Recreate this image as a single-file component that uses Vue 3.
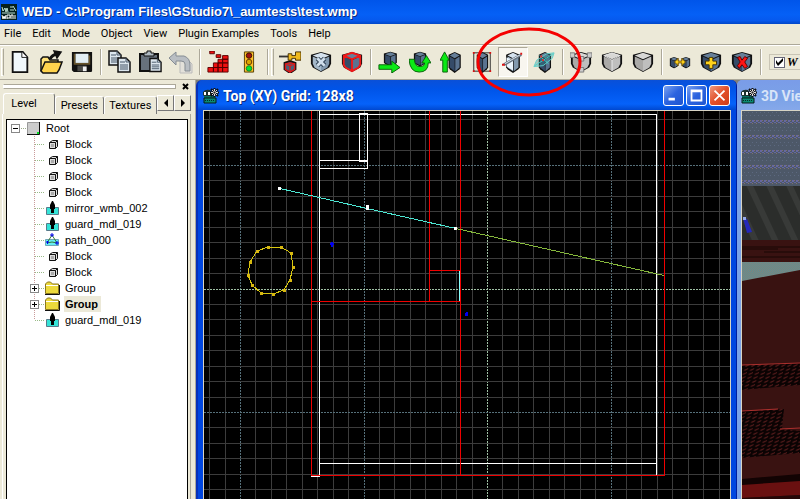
<script setup>
import { ref } from 'vue'

const menus = ['File', 'Edit', 'Mode', 'Object', 'View', 'Plugin Examples', 'Tools', 'Help']
const tools = [
  { id: 'grip' },
  { id: 'new', label: 'New' },
  { id: 'open', label: 'Open' },
  { id: 'save', label: 'Save' },
  { id: 'sep' },
  { id: 'copy', label: 'Copy' },
  { id: 'paste', label: 'Paste' },
  { id: 'undo', label: 'Undo' },
  { id: 'sep' },
  { id: 'build', label: 'Build' },
  { id: 'run', label: 'Run' },
  { id: 'sep' },
  { id: 'grip' },
  { id: 'pin', label: 'Pin' },
  { id: 'deselect', label: 'Deselect' },
  { id: 'select', label: 'Select' },
  { id: 'sep' },
  { id: 'move', label: 'Move' },
  { id: 'rotate', label: 'Rotate' },
  { id: 'scale', label: 'Scale' },
  { id: 'frame', label: 'Frame' },
  { id: 'clip', label: 'Clip plane' },
  { id: 'orbit', label: 'Slice' },
  { id: 'sep' },
  { id: 'vertex', label: 'Vertices' },
  { id: 'edge', label: 'Edges' },
  { id: 'face', label: 'Faces' },
  { id: 'sep' },
  { id: 'link', label: 'Link' },
  { id: 'add', label: 'Add' },
  { id: 'remove', label: 'Remove' },
  { id: 'sep' }
]
const active = ref('clip')
const wire = ref(true)
const tab = ref('Level')
const tree = [
  { t: 'Block', k: 'block' },
  { t: 'Block', k: 'block' },
  { t: 'Block', k: 'block' },
  { t: 'Block', k: 'block' },
  { t: 'mirror_wmb_002', k: 'entity' },
  { t: 'guard_mdl_019', k: 'entity' },
  { t: 'path_000', k: 'path' },
  { t: 'Block', k: 'block' },
  { t: 'Block', k: 'block' },
  { t: 'Group', k: 'folder' },
  { t: 'Group', k: 'folder', sel: true },
  { t: 'guard_mdl_019', k: 'entity' }
]
const ring = [[257, 251], [268, 247], [281, 247], [291, 253], [293, 267], [290, 280], [284, 290], [273, 294], [261, 293], [252, 285], [248, 275], [250, 262]]
const ringPoints = ring.map((p) => p.join(',')).join(' ')
const origin = { x: 240, y: 165 }
const step = 15.4375
const cols = []
const rows = []
for (let i = -3; i < 33; i++) cols.push({ p: Math.round(origin.x + i * step), major: i % 8 === 0 && i !== 16, axis: i === 16 })
for (let i = -4; i < 23; i++) rows.push({ p: Math.round(origin.y + i * step), major: i % 8 === 0 && i !== 8, axis: i === 8 })
</script>

<template>
  <div class="app">
    <svg class="defs" width="0" height="0" aria-hidden="true">
      <defs>
        <symbol id="cube" viewBox="0 0 24 24" preserveAspectRatio="none">
          <path d="M2 4 12 1l10 3v14l-2 2-8 4-8-4-2-2z" fill="#111" />
          <path d="m4 5 8-3 8 3-8 3z" class="c1" />
          <path d="m4 6 8 3v13l-8-4z" class="c2" />
          <path d="m13 9 7-3v12l-7 4z" class="c3" />
        </symbol>
        <symbol id="shield" viewBox="0 0 24 24">
          <path d="M1 4 12 1l11 3v10l-2 4-9 5-9-5-2-4z" fill="#111" />
          <path d="m3 5 9-3 9 3-9 4z" class="c1" />
          <path d="m3 6 9 4v12l-7-4-2-4z" class="c2" />
          <path d="m12 10 9-4v8l-2 4-7 4z" class="c3" />
        </symbol>
        <symbol id="logo" viewBox="0 0 16 16">
          <path d="M0 4q2-3 7-2l2 3v3H1q-2-1-1-4z" fill="#1c3230" />
          <path d="M1 8h11v2H1z" fill="#087060" />
          <path d="M1 10h12v5H1z" fill="#0b8a72" stroke="#041c18" />
          <path d="M1 4h2v3H1zm4 0h2v3H5z" fill="#fff" />
          <path d="M2 12.500h10" stroke="#062a24" stroke-dasharray="1 1" />
          <path d="m8 1 7 7m0-7-7 7m3.500-8v9M7 4.500h9" stroke="#111" stroke-width="2" />
          <path d="m9 2 5 5m0-5-5 5m2.500-6v7M8 4.500h7" stroke="#ddd" />
          <path d="M10.500 3.500h2v2h-2z" fill="#222" />
        </symbol>
        <symbol id="page" viewBox="0 0 24 24">
          <path d="M5 1h11l5 6v16H5z" fill="#f0f8fc" stroke="#111" stroke-width="2" />
          <path d="M15 1v6h6" fill="#fff" stroke="#111" />
        </symbol>
        <symbol id="doc" viewBox="0 0 14 16">
          <path d="M1 1h8l4 4v10H1z" fill="#dce6ee" stroke="#111" stroke-width="1.500" />
          <path d="M9 1v4h4M3 5h5M3 8h8M3 10h8M3 12h8" fill="none" stroke="#456" />
        </symbol>
      </defs>
    </svg>

    <header class="titlebar">
      <svg class="appicon" viewBox="0 0 16 16">
        <path d="M0 0h16v16H0z" fill="#06201c" />
        <path d="m1 3 1 4 2-3 1 4 1-4 1 4M9 3h3M9 6h4M12 2l3 5M1 9h13" fill="none" stroke="#bde2d4" />
        <path d="m1 11 1 4 1-3 1 3 1-4m1 4v-4h3v3H6m4 1v-4h2v4m2-4v4" fill="none" stroke="#fff" />
      </svg>
      <h1>WED - C:\Program Files\GStudio7\_aumtests\test.wmp</h1>
    </header>

    <nav class="menu">
      <button v-for="m in menus" :key="m" type="button">{{ m }}</button>
    </nav>

    <div class="toolbar">
      <template v-for="(b, i) in tools" :key="i">
        <span v-if="b.id === 'sep'" class="sep"></span>
        <span v-else-if="b.id === 'grip'" class="grip"></span>
        <button v-else type="button" class="tool" :class="[b.id, { on: active === b.id }]" :aria-label="b.label" @click="active = b.id">
          <svg viewBox="0 0 24 24">
            <use v-if="b.id === 'new'" href="#page" x="-1" />
            <g v-else-if="b.id === 'open'" stroke="#111" stroke-width="1.500">
              <path d="M2 21V9l2-2h5l2 3h8v3" fill="#ffe27a" />
              <path d="m2 21 4-9h17l-3 8-2 3H4z" fill="#ffd34d" />
              <path d="M11 9q2-4 7-5" fill="none" stroke-width="3" />
              <path d="m15 1 7 1-4 6z" fill="#111" />
            </g>
            <g v-else-if="b.id === 'save'">
              <path d="M1 1h22v21l-1 1H3l-2-2z" fill="#111" />
              <path d="M3 3h2v11H3zm16 2h2v9h-2zM3 13h18v2H3z" fill="#66532c" />
              <path d="M5 3h14v10H5z" fill="#e2eef4" />
              <path d="M7 16h10v6H7z" fill="#4b4b48" /><path d="M13 17h4v5h-4z" fill="#eee" />
            </g>
            <g v-else-if="b.id === 'copy'">
              <use href="#doc" x="1" y="0" width="14" height="16" /><use href="#doc" x="10" y="7" width="14" height="16" />
            </g>
            <g v-else-if="b.id === 'paste'">
              <path d="M2 4h18v17H2z" fill="#67717c" stroke="#111" stroke-width="2" />
              <path d="M6 6V3h3V1h4v2h3v3z" fill="#aeb9c2" stroke="#111" />
              <use href="#doc" x="11" y="7" width="13" height="16" />
            </g>
            <g v-else-if="b.id === 'undo'">
              <path d="M11 10h8l4 4v9H11z" fill="#e3e1da" stroke="#bbb" />
              <path d="m0 8 7-6v4h8q6 2 6 9v6h-5v-7q0-3-4-3H7v4z" fill="#b9bec3" stroke="#858c93" />
            </g>
            <g v-else-if="b.id === 'build'" fill="#f01010" stroke="#500" stroke-width="1">
              <path d="M3 0h5v3H3zM10 4h5v3h-5zM17 5h6v4h-6zM12 9h5v4h-5zM17 9h6v4h-6zM7 13h5v5H7zM12 13h5v5h-5zM17 13h6v5h-6zM1 18h6v5H1zM7 18h5v5H7zM12 18h5v5h-5zM17 18h6v5h-6z" />
            </g>
            <g v-else-if="b.id === 'run'">
              <path d="M7 1h10v22H7z" fill="#ffc12a" stroke="#4d3900" />
              <circle cx="12" cy="5" r="3" fill="#a01010" stroke="#310" /><circle cx="12" cy="12" r="3" fill="#d8a600" stroke="#630" /><circle cx="12" cy="19" r="3" fill="#00e62a" stroke="#173" />
            </g>
            <g v-else-if="b.id === 'pin'">
              <path d="m6 13 6-2 6 2v7l-6 4-6-4z" fill="#4a6078" stroke="#111" stroke-width="2" />
              <path d="m7 14 5-1 5 1v6l-5 3-5-3zl5 2 5-2m-5 2v7" fill="none" stroke="#e01818" stroke-width="1.500" />
              <path d="M0 6h12" stroke="#333" stroke-width="2" />
              <path d="M10 3h4v2h4V1h6v9h-6V8h-4v2h-4z" fill="#efb91e" stroke="#3d2900" />
            </g>
            <g v-else-if="b.id === 'deselect'">
              <use href="#shield" class="ice" />
              <path d="m8 8 8 8m0-8-8 8" stroke="#26384c" stroke-width="5" /><path d="m8 8 8 8m0-8-8 8" stroke="#cfdeeb" stroke-width="3" />
            </g>
            <g v-else-if="b.id === 'select'">
              <use href="#shield" class="steel" /><path d="m3 5 9-3 9 3v10l-2 3-7 4-7-4-2-3zl9 4 9-4m-9 4v12" fill="none" stroke="#f01818" stroke-width="2" />
            </g>
            <g v-else-if="b.id === 'move'">
              <use href="#cube" x="5" y="0" width="17" height="17" class="steel" />
              <path d="M1 15h14v-4l9 7-9 6v-4H1z" fill="#0bea15" stroke="#075c08" />
            </g>
            <g v-else-if="b.id === 'rotate'">
              <use href="#cube" x="4" y="0" width="16" height="17" class="steel" />
              <path d="M0 9h6q0 8 6 8 5 0 5-4h-3l5-8 5 8h-3q0 10-10 10Q1 23 0 9z" fill="#0bea15" stroke="#075c08" />
            </g>
            <g v-else-if="b.id === 'scale'">
              <use href="#cube" x="8" y="0" width="16" height="24" class="steel" /><path d="M3 23V10H0l5-9 5 9H8v13z" fill="#0bea15" stroke="#075c08" />
            </g>
            <g v-else-if="b.id === 'frame'">
              <use href="#cube" x="5" y="0" width="15" height="24" class="steel" />
              <path d="M3 2h18v20H3z" fill="none" stroke="#222" />
              <path d="M2 1h2v2H2zm18 0h2v2h-2zM2 21h2v2H2zm18 0h2v2h-2z" fill="#d11" />
            </g>
            <g v-else-if="b.id === 'clip'">
              <use href="#cube" x="3" y="0" width="18" height="24" class="ice" /><path d="m5 7 7 3v11l-7-4z" fill="#eaf4fc" />
              <path d="m2 15 19-11" stroke="#687582" stroke-width="3" /><path d="m3 14 17-10" stroke="#e1ebf4" />
              <path d="M0 14h3v2H0zm20-12h2v2h-2z" fill="#d11" />
            </g>
            <g v-else-if="b.id === 'orbit'">
              <use href="#cube" x="5" y="0" width="16" height="24" class="steel" />
              <path d="m1 17 3-7L15 3l8-1-2 6-10 8z" fill="#338b91" fill-opacity=".35" stroke="#5ed1cb" /><path d="m7 5 10 9M2 16 22 3" stroke="#46d5d0" /><path d="M8 5h2v2H8zm2 4h2v2h-2z" fill="#e22" />
            </g>
            <g v-else-if="b.id === 'vertex'">
              <use href="#shield" class="gray" /><path d="M0 2h5v5H0zm19 0h5v5h-5zM9 6h6v5H9zM9 18h6v5H9z" fill="#ccc" stroke="#777" />
            </g>
            <g v-else-if="b.id === 'edge'"><use href="#shield" class="gray" /><path d="m3 5 9 5 9-5m-9 5v12M3 5l9-3 9 3" fill="none" stroke="#eee" /></g>
            <use v-else-if="b.id === 'face'" href="#shield" class="gray" />
            <g v-else-if="b.id === 'link'">
              <use href="#cube" x="0" y="6" width="11" height="13" class="steel" /><use href="#cube" x="13" y="6" width="11" height="13" class="steel" />
              <path d="m6 12 4-4v3h4V8l4 4-4 4v-3h-4v3z" fill="#ffd31b" stroke="#6b4d00" />
            </g>
            <g v-else-if="b.id === 'add'"><use href="#shield" class="steel" /><path d="M10 7h4v4h4v4h-4v4h-4v-4H6v-4h4z" fill="#ffd31b" stroke="#423000" /></g>
            <g v-else><use href="#shield" class="steel" /><path d="m7 7 3-1 2 4 3-4 3 2-3 4 3 5-3 2-3-4-3 4-2-3 3-4z" fill="#ff1515" stroke="#500" /></g>
          </svg>
        </button>
      </template>
      <label class="check">
        <input v-model="wire" type="checkbox" />
        <svg viewBox="0 0 13 13"><path v-if="wire" d="m3 5 2 3 5-5v3L5 11 3 8z" fill="#000" /></svg>
        <em>W</em>
      </label>
      <svg class="highlight" viewBox="0 0 110 74" aria-hidden="true"><ellipse cx="55" cy="37" rx="51" ry="33" fill="none" stroke="#f50000" stroke-width="3" /></svg>
    </div>

    <main class="work">
      <aside class="side">
        <div class="dock"><span></span><button type="button" aria-label="Close panel"><svg viewBox="0 0 8 8"><path d="m1 1 5 5m0-5L1 6" stroke="#000" stroke-width="2" /></svg></button></div>
        <div class="tabs">
          <button v-for="t in ['Level', 'Presets', 'Textures']" :key="t" type="button" class="tab" :class="{ cur: tab === t }" @click="tab = t">{{ t }}</button>
          <button type="button" class="arrow" aria-label="Previous tab"><svg viewBox="0 0 8 8"><path d="M6 0v8L2 4z" /></svg></button>
          <button type="button" class="arrow" aria-label="Next tab"><svg viewBox="0 0 8 8"><path d="M2 0v8l4-4z" /></svg></button>
        </div>
        <div class="pane">
          <div class="tree">
            <div class="root">
              <svg width="30" height="16" viewBox="0 0 30 16">
                <rect x=".5" y="4.500" width="8" height="8" fill="#fff" stroke="#888" /><path d="M2 8.500h5" stroke="#000" /><path d="M10 8.500h6" stroke="#9a8" stroke-dasharray="1 1" />
                <rect x="16.500" y="2.500" width="12" height="12" fill="#ccc" /><path d="M16.500 14V2.500H28" fill="none" stroke="#999" /><path d="M16 14.500h12.500V2" fill="none" stroke="#111" /><path d="M26 12h2v2h-2z" fill="#0d2" />
              </svg>
              <span>Root</span>
            </div>
            <ul>
              <li v-for="(n, i) in tree" :key="i" :class="{ sel: n.sel }">
                <svg width="34" height="16" viewBox="0 0 34 16">
                  <path :d="i === tree.length - 1 ? 'M4.500 0v8' : 'M4.500 0v16'" stroke="#c99a9a" stroke-dasharray="1 1" />
                  <path d="M5 8.500h10" stroke="#9b8" stroke-dasharray="1 1" />
                  <g v-if="n.k === 'folder'">
                    <rect x=".5" y="4.500" width="8" height="8" fill="#fff" stroke="#888" /><path d="M2 8.500h5M4.500 6v5" stroke="#000" />
                    <path d="M15.500 13.500V4l2-2h3l2 2h6v9.500z" fill="#ecd93c" stroke="#8a761f" /><path d="M16 5.500h12" stroke="#fff" /><path d="M15 14.500h14.500V5" fill="none" stroke="#111" />
                  </g>
                  <g v-else-if="n.k === 'entity'"><path d="M16.500 7.500h12v7h-12z" fill="#35e4d8" stroke="#587a8a" /><path d="M22 1h1l2 4v4h-1v4h-3V9h-1V5z" fill="#000" /></g>
                  <g v-else-if="n.k === 'path'"><path d="M15.500 7.500h13v6h-13z" fill="#65edf0" stroke="#70a6b8" /><path d="m17 11 5-8 5 8-5-1z" fill="none" stroke="#387b38" /><path d="M16 10h3M17.500 9v3M20 3h4M22 1v4M25 11h4M27 9v4" stroke="#00e" /></g>
                  <g v-else><path d="m19.500 6.500 3-2h5v6l-2 2h-6z" fill="#ddd" stroke="#111" /><path d="M19.500 6.500h6v6m0-6 2-2" fill="none" stroke="#111" /><path d="M21 8h3v3h-3z" fill="#aaa" /></g>
                </svg>
                <span>{{ n.t }}</span>
              </li>
            </ul>
          </div>
        </div>
      </aside>

      <section class="win top">
        <header class="wintitle">
          <svg class="wicon"><use href="#logo" /></svg>
          <h2>Top (XY) Grid: 128x8</h2>
          <div class="winbtns">
            <button type="button" aria-label="Minimize"><svg viewBox="0 0 21 21"><path d="M5 13h7v3H5z" fill="#fff" /></svg></button>
            <button type="button" aria-label="Maximize"><svg viewBox="0 0 21 21"><path d="M4 4h13v13H4zm2 3v8h9V7z" fill="#fff" fill-rule="evenodd" /></svg></button>
            <button type="button" class="x" aria-label="Close"><svg viewBox="0 0 21 21"><path d="m5 5 11 11m0-11L5 16" stroke="#fff" stroke-width="2" /></svg></button>
          </div>
        </header>
        <div class="view">
          <svg viewBox="204 111 527 388" preserveAspectRatio="xMinYMin slice" shape-rendering="crispEdges" fill="none" role="img" aria-label="Top view of level">
            <path v-for="c in cols" :key="'c' + c.p" :d="`M${c.p}.5 111v388`" :class="{ major: c.major, axis: c.axis }" class="line" />
            <path v-for="r in rows" :key="'r' + r.p" :d="`M204 ${r.p}.5h527`" :class="{ major: r.major, axis: r.axis }" class="line" />
            <path d="M319.500 111v365M319 114.500h337.500V475M319 463.500h337M359.500 161v-47.500h8V161zM319 160.500h48.500v8H319M311 476.500h9" stroke="#fff" />
            <path d="M311.500 111v364.500h353V111M460.500 111v364M429.500 111v190M429 270.500h31M311 301.500h149" stroke="#f00000" />
            <path d="M459.500 271v30" stroke="#8ff" />
            <path d="m280 188.500 87 20 89 20" stroke="#4de8d4" />
            <path d="m456 228.500 208 47" stroke="#86b93c" />
            <path d="M278 187h3v3h-3zM366 205h3v5h-3zM454 227h3v3h-3z" fill="#fff" />
            <polygon :points="ringPoints" stroke="#d8c810" />
            <rect v-for="p in ring" :key="p.join()" :x="p[0] - 1" :y="p[1] - 1" width="3" height="3" fill="#d8b810" />
            <path d="M331 242h2v5h-2zM330 243h4v2h-4zM465 313h3v3h-3zM466 312h2v1h-2z" fill="#0000f0" />
          </svg>
        </div>
      </section>

      <section class="win three">
        <header class="wintitle">
          <svg class="wicon"><use href="#logo" /></svg>
          <h2>3D View</h2>
        </header>
        <div class="view">
          <svg viewBox="742 111 58 388" preserveAspectRatio="xMinYMin slice" role="img" aria-label="3D view of level">
            <defs>
              <pattern id="sky" width="4" height="15" patternUnits="userSpaceOnUse" y="108"><path d="M0 0h4v15H0z" fill="#4d5868" /><path d="M0 12h2v2H0zM2 14h2v1H2z" fill="#6668a0" /><path d="M2 12h1v1H2zM0 0h1v1H0z" fill="#80706e" /><path d="M0 4h1v1H0zM2 7h1v1H2z" fill="#5d6980" /></pattern>
              <pattern id="stairs" width="6" height="4" patternUnits="userSpaceOnUse" patternTransform="skewX(-18)"><path d="M0 0h6v4H0z" fill="#0b0303" /><path d="M0 2 4 0v1L1 3z" fill="#642020" /></pattern>
              <pattern id="stripe" width="18" height="12" patternUnits="userSpaceOnUse" patternTransform="rotate(-25)"><path d="M0 0h18v12H0z" fill="#2b2d2b" /><path d="M4 0h6v12H4z" fill="#383a38" /></pattern>
              <pattern id="mesh" width="2" height="2" patternUnits="userSpaceOnUse"><path d="M0 0h2v2H0z" fill="#83827b" /><path d="M0 0h1v1H0zM1 1h1v1H1z" fill="#5c9093" /></pattern>
            </defs>
            <path d="M742 111h58v76h-58z" fill="url(#sky)" />
            <path d="M742 186h58v54h-58z" fill="url(#stripe)" />
            <path d="M742 240h58v259h-58z" fill="#391211" />
            <path d="M742 247h58M742 249h36M764 252h36M742 257h58" stroke="#190605" />
            <path d="M742 262h58v8l-58 11z" fill="url(#mesh)" />
            <path d="m743 218 4 1 5 13-5 1z" fill="#2428bb" /><path d="M743 217h3v3h-3z" fill="#95aae8" />
            <path d="m742 365 58-2v22l-58 5zM742 411l42-2-2 20 18 2v22l-58 5z" fill="url(#stairs)" />
            <path d="m742 365 58-2M742 411l36-2M780 429l20-1" stroke="#ac302e" />
            <path d="m742 479 58-5v9l-58 3z" fill="#120303" /><path d="m742 485 58-4v14l-58 3z" fill="#691010" /><path d="m742 498 58-3v4h-58z" fill="#250707" />
          </svg>
        </div>
      </section>
    </main>
  </div>
</template>

<style>
html, body, #app { height: 100%; }
body { margin: 0; overflow: hidden; }
</style>

<style scoped>
.app { height: 100%; min-height: 0; display: flex; flex-direction: column; background: #ece9d8; color: #000; font: 11px/16px "Liberation Sans", Arial, sans-serif; overflow: hidden; }
.app * { box-sizing: border-box; }
.defs { position: absolute; }
button { font: inherit; color: inherit; background: none; border: 0; padding: 0; margin: 0; white-space: nowrap; }
h1, h2 { margin: 0; color: #fff; text-shadow: 1px 1px 0 #0a2a80; white-space: nowrap; }
h1 { font: bold 13px/16px "Liberation Sans", Arial, sans-serif; }
h2 { font: bold 14px/16px Roboto, "Noto Sans", sans-serif; }
.titlebar { flex: none; height: 24px; padding: 0 2px 0 1px; display: flex; align-items: center; gap: 5px; background: linear-gradient(#0055ea, #0560f6 60%, #0659ee 85%, #0046c8); }
.appicon { width: 16px; height: 16px; }
.menu { flex: none; height: 20px; display: flex; align-items: center; gap: 11px; padding: 0 4px; font-family: Roboto, sans-serif; }
.toolbar { position: relative; flex: none; height: 36px; display: flex; align-items: center; gap: 1px; padding-left: 1px; border-top: 1px solid #aca899; border-bottom: 1px solid #aca899; box-shadow: inset 0 1px #fff; }
.sep { flex: none; width: 2px; height: 26px; margin: 0 1px 0 2px; border-left: 1px solid #aca899; border-right: 1px solid #fff; }
.grip { flex: none; width: 3px; height: 28px; border: 1px solid #fff; border-right-color: #aca899; }
.tool { flex: none; width: 30px; height: 30px; display: grid; place-items: center; border: 1px solid transparent; }
.tool svg { width: 22px; height: 22px; }
.open svg, .copy svg, .paste svg, .undo svg { width: 24px; height: 24px; }
.tool.on { background: #f8f6ef; border-color: #aca899 #fff #fff #aca899; }
.ice { --c1: #d5e2ee; --c2: #a3b7c8; --c3: #8299ae; }
.steel { --c1: #667f99; --c2: #354b68; --c3: #5a7390; }
.gray { --c1: #d8d8d6; --c2: #aaa9a7; --c3: #bfbfbe; }
.c1 { fill: var(--c1); }
.c2 { fill: var(--c2); }
.c3 { fill: var(--c3); }
.check { position: relative; display: flex; align-items: center; gap: 2px; margin-left: 5px; padding: 0 3px 0 4px; height: 16px; border: 1px solid #c9c5b5; }
.check input { appearance: none; width: 11px; height: 11px; margin: 0; background: #fff; border: 1px solid #667; }
.check svg { position: absolute; left: 3px; top: 0; width: 13px; height: 13px; pointer-events: none; }
.check em { font: italic bold 12px/14px "Liberation Serif", serif; }
.highlight { position: absolute; left: 474px; top: -20px; width: 110px; height: 74px; pointer-events: none; z-index: 3; }
.work { flex: 1; min-height: 0; display: flex; background: #807f78; }
.side { flex: none; width: 196px; display: flex; flex-direction: column; background: #ece9d8; border-right: 1px solid #aca899; }
.dock { flex: none; height: 13px; display: flex; align-items: center; gap: 4px; padding: 0 4px 0 3px; }
.dock span { flex: 1; height: 5px; border: 1px solid #aca899; border-left-color: #fff; background: #fff; }
.dock button { width: 11px; height: 12px; display: grid; place-items: center; }
.dock svg { width: 8px; height: 8px; }
.tabs { flex: none; height: 21px; display: flex; align-items: flex-end; padding: 0 4px 0 3px; font-family: Roboto, sans-serif; }
.tab { flex: auto; height: 18px; padding: 0 4px; border: 1px solid #fff; border-right-color: #777; border-bottom: 0; border-radius: 3px 3px 0 0; }
.tab.cur { flex: none; height: 21px; width: 52px; padding: 0 16px 0 6px; }
.arrow { flex: none; width: 17px; height: 16px; margin-bottom: 3px; display: grid; place-items: center; border: 1px solid #fff; border-right-color: #777; border-bottom-color: #777; background: #ece9d8; }
.arrow svg { width: 8px; height: 8px; }
.pane { flex: 1; min-height: 0; margin: 0 4px 0 2px; padding: 5px 2px 0 3px; border-left: 1px solid #fff; border-right: 1px solid #aca899; display: flex; }
.tree { flex: 1; background: #fff; border: 1px solid #000; border-bottom: 0; overflow: hidden; padding-left: 4px; }
.root { display: flex; height: 16px; gap: 5px; }
ul { list-style: none; margin: 0; padding: 0 0 0 19px; }
li { display: flex; height: 16px; }
li svg, .root svg { flex: none; }
li span { padding: 0 1px; }
li.sel span { font-weight: bold; background: #ece9d8; padding-right: 3px; }
.win { display: flex; flex-direction: column; min-width: 0; }
.top { flex: 1; padding: 0 5px; background: #0046e0; border-left: 2px solid #0831b8; border-right: 1px solid #001ea0; border-radius: 6px 6px 0 0; }
.wintitle { flex: none; height: 30px; display: flex; align-items: center; gap: 4px; margin: 0 -5px; padding: 1px 6px 0 5px; background: linear-gradient(#0a50d8, #0054e8 30%, #0562fa 80%, #0048d0); border-radius: 5px 5px 0 0; }
.wintitle h2 { flex: 1; }
.wicon { flex: none; width: 16px; height: 16px; }
.winbtns { display: flex; gap: 2px; }
.winbtns button { width: 21px; height: 21px; border: 1px solid #fff; border-radius: 3px; background: linear-gradient(135deg, #7ba2f0, #2b63df 50%, #1f55d0); }
.winbtns button.x { background: linear-gradient(135deg, #ef9a80, #e2502a 50%, #cf3c16); }
.winbtns svg { display: block; width: 19px; height: 19px; }
.view { flex: 1; min-height: 0; border: 1px solid #d8d4c4; border-bottom: 0; background: #000; }
.view svg { display: block; width: 100%; height: 100%; }
.line { stroke: #3c3c3c; }
.major { stroke: #56707a; stroke-dasharray: 2 1; }
.axis { stroke: #9fc0a4; stroke-dasharray: 2 1; }
.three { flex: none; width: 63px; padding-left: 4px; background: #7ba2e7; border-radius: 6px 0 0 0; }
.three .wintitle { margin: 0 0 0 -4px; padding: 1px 0 0 4px; border-radius: 5px 0 0 0; background: linear-gradient(#7a9ce8, #7ba2e7 60%, #86a8ea); }
.three h2 { color: #d8e4f8; text-shadow: none; }
.three .view { border-right: 0; }
</style>
